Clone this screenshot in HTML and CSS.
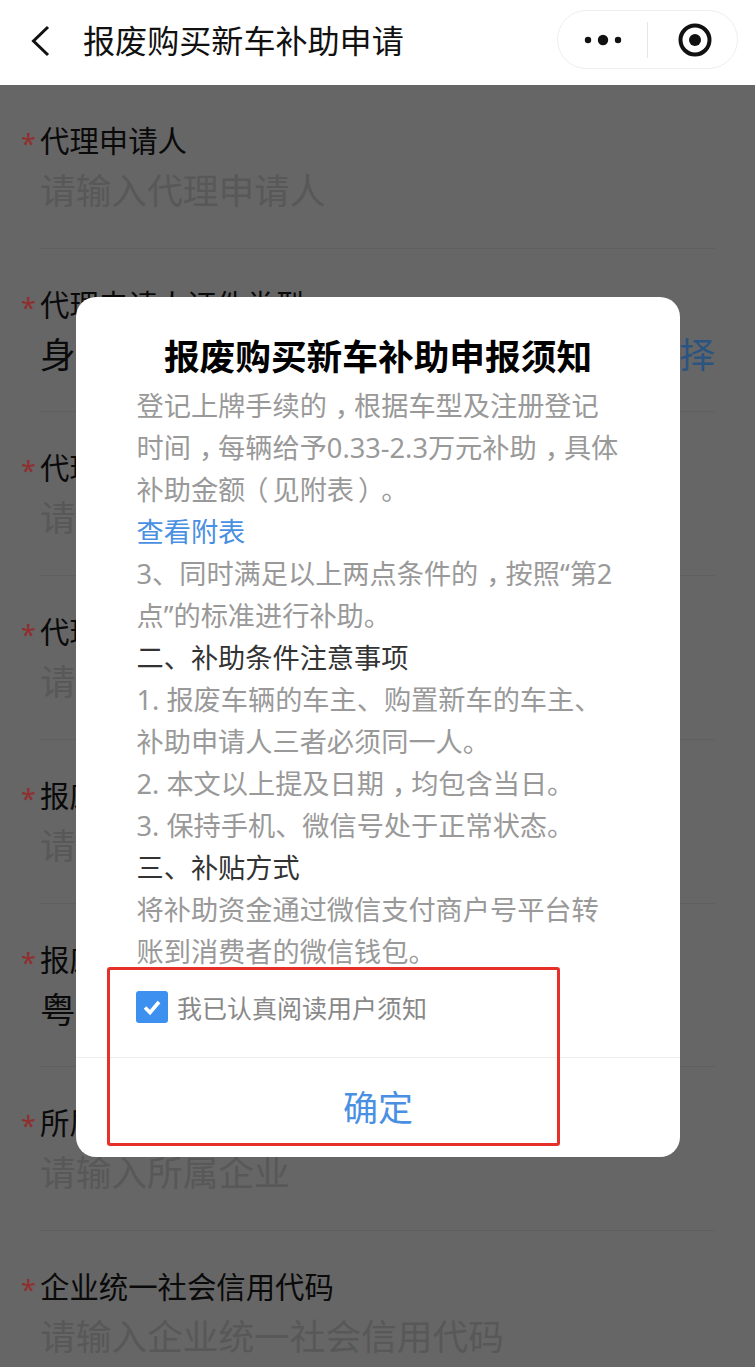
FILE: index.html
```html
<!DOCTYPE html>
<html lang="zh-CN">
<head>
<meta charset="utf-8">
<title>报废购买新车补助申请</title>
<link rel="stylesheet" href="styles.css">
</head>
<body>
<header class="nav">
  <svg class="back" width="20" height="32" viewBox="0 0 20 32"><path d="M18 2 L3.5 16 L18 30" fill="none" stroke="#111" stroke-width="3"/></svg>
  <h1 class="nav-title">报废购买新车补助申请</h1>
  <div class="capsule">
    <svg class="cap-icon" width="38" height="14" viewBox="0 0 38 14"><circle cx="4" cy="7" r="3.2" fill="#111"/><circle cx="19" cy="7" r="5.2" fill="#111"/><circle cx="34" cy="7" r="3.2" fill="#111"/></svg>
    <span class="cap-sep"></span>
    <svg class="cap-icon" width="36" height="36" viewBox="0 0 36 36"><circle cx="18" cy="18" r="14.5" fill="none" stroke="#111" stroke-width="4"/><circle cx="18" cy="18" r="6" fill="#111"/></svg>
  </div>
</header>
<main class="page">
  <section class="form">
    <div class="item"><span class="star">*</span><div class="field"><div class="label">代理申请人</div><div class="ph">请输入代理申请人</div></div></div>
    <div class="item"><span class="star">*</span><div class="field"><div class="label">代理申请人证件类型</div><div class="value"><span>身份证</span><span class="pick">请选择</span></div></div></div>
    <div class="item"><span class="star">*</span><div class="field"><div class="label">代理申请人证件号码</div><div class="ph">请输入代理申请人证件号码</div></div></div>
    <div class="item"><span class="star">*</span><div class="field"><div class="label">代理申请人手机号码</div><div class="ph">请输入代理申请人手机号码</div></div></div>
    <div class="item"><span class="star">*</span><div class="field"><div class="label">报废车辆车架号</div><div class="ph">请输入报废车辆车架号</div></div></div>
    <div class="item"><span class="star">*</span><div class="field"><div class="label">报废车辆车牌号</div><div class="value"><span>粤</span></div></div></div>
    <div class="item"><span class="star">*</span><div class="field"><div class="label">所属企业</div><div class="ph">请输入所属企业</div></div></div>
    <div class="item"><span class="star">*</span><div class="field"><div class="label">企业统一社会信用代码</div><div class="ph">请输入企业统一社会信用代码</div></div></div>
  </section>
  <section class="modal">
    <h2 class="modal-title">报废购买新车补助申报须知</h2>
    <div class="modal-body">
      <p>登记上牌手续的<span class="cm">，</span>根据车型及注册登记</p>
      <p>时间<span class="cm">，</span>每辆给予0.33-2.3万元补助<span class="cm">，</span>具体</p>
      <p>补助金额<span class="pl">（</span>见附表<span class="pr">）</span>。</p>
      <p class="link">查看附表</p>
      <p>3、同时满足以上两点条件的<span class="cm">，</span>按照“第2</p>
      <p>点”的标准进行补助。</p>
      <p class="head">二、补助条件注意事项</p>
      <p>1. 报废车辆的车主、购置新车的车主、</p>
      <p>补助申请人三者必须同一人。</p>
      <p>2. 本文以上提及日期<span class="cm">，</span>均包含当日。</p>
      <p>3. 保持手机、微信号处于正常状态。</p>
      <p class="head">三、补贴方式</p>
      <p>将补助资金通过微信支付商户号平台转</p>
      <p>账到消费者的微信钱包。</p>
    </div>
    <label class="agree">
      <span class="check"><svg width="20" height="18" viewBox="0 0 20 18"><path d="M3 9.5 L8 14.5 L17 4" fill="none" stroke="#fff" stroke-width="3.6"/></svg></span>
      <span class="agree-text">我已认真阅读用户须知</span>
    </label>
    <div class="confirm">确定</div>
    <div class="annotation"></div>
  </section>
</main>
</body>
</html>
```
FILE: styles.css
```css
* { box-sizing: border-box; margin: 0; padding: 0; }
html, body { height: 1367px; overflow: hidden; }
body { font-family: "Noto Sans", "Noto Sans CJK SC", sans-serif; background: #666; color: #000; }

.nav { height: 85px; background: #fff; display: flex; align-items: center; padding: 0 17px 0 30px; }
.back { flex: none; margin: -4px 33px 0 0; }
.nav-title { flex: 1; font-size: 32.1px; font-weight: 400; color: #111; line-height: 40px; margin-top: -4px; }
.capsule { width: 181px; height: 59px; margin-top: -6px; border: 1.5px solid #eee; border-radius: 30px; display: flex; align-items: center; justify-content: space-between; padding: 0 24px 0 26px; }
.cap-sep { width: 1px; height: 36px; background: #e6e6e6; margin-right: 4px; }

.page { position: relative; height: 1282px; background: #666; overflow: hidden; }
.form { padding: 36px 40px 0 21px; }
.item { display: flex; height: 163.72px; }
.star { width: 19px; font-size: 27px; line-height: 46px; color: #8f2f2f; }
.field { flex: 1; height: 127.72px; border-bottom: 1px solid #5f5f5f; }
.label { font-size: 29.4px; line-height: 40px; color: #0a0a0a; }
.ph, .value { font-size: 35.7px; line-height: 56px; margin-top: 1px; }
.ph { color: #585858; }
.value { display: flex; justify-content: space-between; color: #0a0a0a; }
.pick { color: #2c5481; }

.modal { position: absolute; left: 76px; top: 212px; width: 604px; height: 860px; background: #fff; border-radius: 20px; display: flex; flex-direction: column; }
.modal-title { height: 88px; padding-top: 34px; font-size: 35.7px; line-height: 50px; font-weight: 700; text-align: center; color: #000; }
.modal-body { padding: 0 40px 0 60.5px; font-size: 27.2px; line-height: 42px; color: #999; white-space: nowrap; }
.link { color: #4a90e2; }
.head { color: #333; }
.cm { display: inline-block; transform: translateX(8px); }
.pl { display: inline-block; transform: translateX(-4px); }
.pr { display: inline-block; transform: translateX(4px); }

.agree { height: 84px; padding: 18px 0 0 60px; display: flex; align-items: flex-start; font-size: 25px; line-height: 34px; color: #888; }
.check { flex: none; width: 32px; height: 32px; margin-right: 9px; background: #3d8ff0; border-radius: 3px; display: flex; align-items: center; justify-content: center; }
.confirm { flex: 1; border-top: 1px solid #eee; padding-bottom: 4px; display: flex; align-items: center; justify-content: center; font-size: 35px; color: #4a90e2; }
.annotation { position: absolute; left: 31px; top: 670px; width: 453px; height: 179px; border: 3px solid #e8302a; border-radius: 3px; }
```
